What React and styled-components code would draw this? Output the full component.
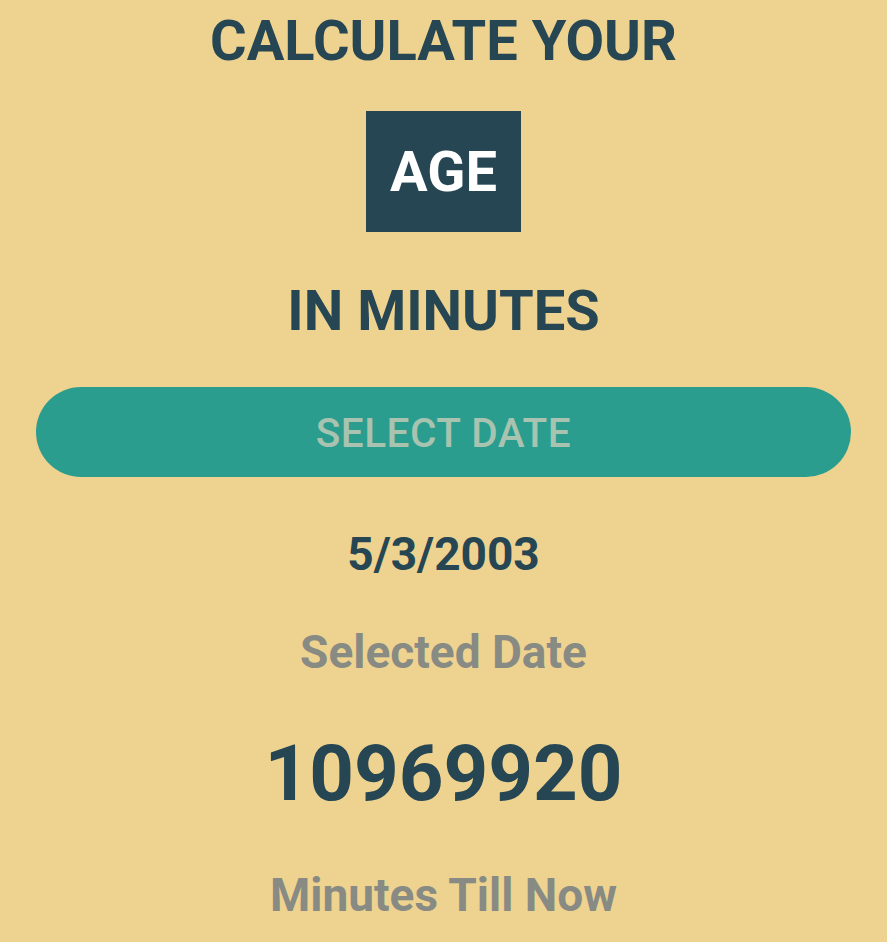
import React from 'react';
import styled, { createGlobalStyle } from 'styled-components';

const GlobalStyle = createGlobalStyle`
    html, body {
        margin: 0;
        padding: 0;
        background: #eed28f;
    }

    body {
        font-family: Roboto, 'Noto Sans', sans-serif;
    }
`;

const Screen = styled.main`
    /* full page, yellow sand background */
    min-height: 942px;
    background: #eed28f;
    box-sizing: border-box;
    padding: 13px 36px 0;

    /* flex properties as parent */
    display: flex;
    flex-direction: column;
    align-items: center;
`;

const Heading = styled.h1`
    margin: ${(p) => p.$top || 0}px 0 0;
    color: #264653;
    font-size: 56px;
    font-weight: 700;
    line-height: 1;
    text-align: center;
`;

const AgeBox = styled.div`
    margin-top: 42px;
    width: 155px;
    height: 121px;
    background: #264653;
    color: #ffffff;
    font-size: 56px;
    font-weight: 700;
    line-height: 1;

    /* flex properties as parent */
    display: flex;
    justify-content: center;
    align-items: center;
`;

const SelectButton = styled.button`
    margin-top: 48px;
    width: 100%;
    height: 90px;
    padding: 2px 0 0;
    border: none;
    border-radius: 45px;
    background: #2a9d8f;
    color: #a8c3af;
    font-family: Roboto, sans-serif;
    font-size: 40.5px;
    font-weight: 500;
    letter-spacing: 0.5px;
    cursor: pointer;
`;

const Value = styled.div`
    margin-top: ${(p) => p.$top}px;
    color: ${(p) => (p.$muted ? '#888a84' : '#264653')};
    font-size: ${(p) => p.$size}px;
    font-weight: 700;
    line-height: 1;
    text-align: center;
`;

const App = () => {
    return (
        <>
            <GlobalStyle />
            <Screen>
                <Heading>CALCULATE YOUR</Heading>
                <AgeBox>AGE</AgeBox>
                <Heading $top={51}>IN MINUTES</Heading>

                <SelectButton>SELECT DATE</SelectButton>

                <Value $top={54} $size={46}>5/3/2003</Value>
                <Value $top={52} $size={46} $muted>Selected Date</Value>
                <Value $top={60} $size={78}>10969920</Value>
                <Value $top={59} $size={46} $muted>Minutes Till Now</Value>
            </Screen>
        </>
    );
};

export default App;
